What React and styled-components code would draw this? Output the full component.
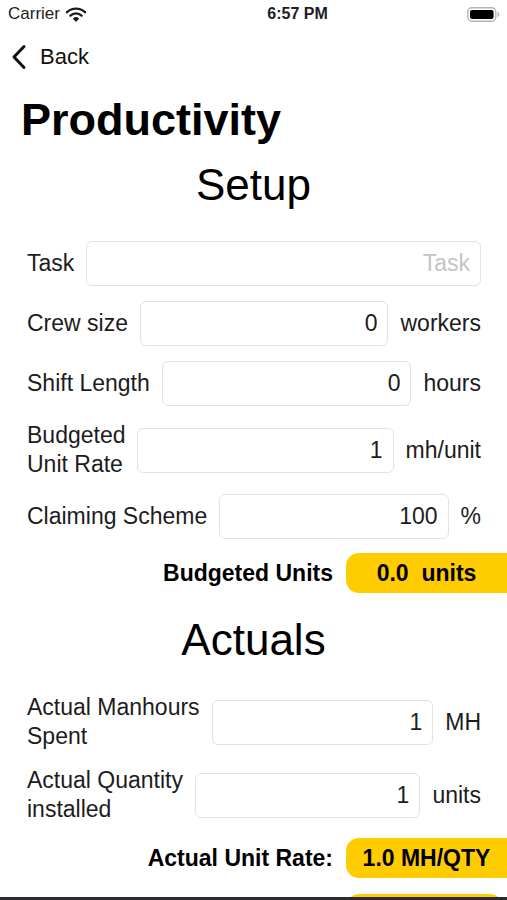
import React from "react";
import styled, { createGlobalStyle } from "styled-components";

const GlobalStyle = createGlobalStyle`
  html, body {
    margin: 0;
    padding: 0;
    background: #ffffff;
  }
  body {
    font-family: "Liberation Sans", Arial, sans-serif;
    color: #000;
  }
`;

const setupRows = [
  { label: "Task", placeholder: "Task", value: "", unit: null },
  { label: "Crew size", value: "0", unit: "workers" },
  { label: "Shift Length", value: "0", unit: "hours" },
  { label: ["Budgeted", "Unit Rate"], value: "1", unit: "mh/unit" },
  { label: "Claiming Scheme", value: "100", unit: "%" },
];

const actualRows = [
  { label: ["Actual Manhours", "Spent"], value: "1", unit: "MH" },
  { label: ["Actual Quantity", "installed"], value: "1", unit: "units" },
];

const WifiIcon = () => (
  <svg width="20" height="15" viewBox="0 0 20 15">
    <path d="M1 5.2 A13 13 0 0 1 19 5.2" stroke="#1c1c1e" strokeWidth="2.4" fill="none" strokeLinecap="round" />
    <path d="M4.4 8.6 A8.2 8.2 0 0 1 15.6 8.6" stroke="#1c1c1e" strokeWidth="2.4" fill="none" strokeLinecap="round" />
    <path d="M7.6 11.7 A3.6 3.6 0 0 1 12.4 11.7 L10 14.2 Z" fill="#1c1c1e" stroke="#1c1c1e" strokeWidth="1.2" strokeLinejoin="round" />
  </svg>
);

const BatteryIcon = () => (
  <svg width="33" height="15" viewBox="0 0 33 15">
    <rect x="0.8" y="0.8" width="28" height="13.4" rx="4" fill="none" stroke="#b4b4b6" strokeWidth="1.4" />
    <rect x="3" y="3" width="23.6" height="9" rx="2" fill="#000" />
    <path d="M30.6 5 Q32.4 5.3 32.4 7.5 Q32.4 9.7 30.6 10 Z" fill="#b4b4b6" />
  </svg>
);

const ChevronLeft = () => (
  <svg width="16" height="26" viewBox="0 0 16 26">
    <path d="M13 2.5 L3 13 L13 23.5" stroke="#111" strokeWidth="3" fill="none" strokeLinecap="round" strokeLinejoin="round" />
  </svg>
);

const FieldRow = ({ row }) => (
  <Row>
    <Label>
      {Array.isArray(row.label)
        ? row.label.map((l) => <span key={l}>{l}</span>)
        : row.label}
    </Label>
    <Field
      type="text"
      placeholder={row.placeholder}
      defaultValue={row.value}
    />
    {row.unit && <Unit>{row.unit}</Unit>}
  </Row>
);

const App = () => {
  return (
    <Page>
      <GlobalStyle />
      <StatusBar>
        <Carrier>
          Carrier <WifiIcon />
        </Carrier>
        <Time>6:57 PM</Time>
        <BatteryIcon />
      </StatusBar>
      <NavBar>
        <BackButton>
          <ChevronLeft />
          Back
        </BackButton>
      </NavBar>
      <Content>
        <Title>Productivity</Title>
        <SectionTitle>Setup</SectionTitle>
        <Form $top={30}>
          {setupRows.map((row, i) => (
            <FieldRow key={i} row={row} />
          ))}
          <ResultRow>
            <ResultLabel>Budgeted Units</ResultLabel>
            <Badge>0.0&nbsp; units</Badge>
          </ResultRow>
        </Form>
        <SectionTitle $top={21}>Actuals</SectionTitle>
        <Form $top={27}>
          {actualRows.map((row, i) => (
            <FieldRow key={i} row={row} />
          ))}
          <ResultRow>
            <ResultLabel>Actual Unit Rate:</ResultLabel>
            <Badge>1.0 MH/QTY</Badge>
          </ResultRow>
          {/* next result badge, only its top edge is on screen */}
          <ResultRow $gap={16}>
            <Badge $inset={4} />
          </ResultRow>
        </Form>
      </Content>
      <BottomEdge />
    </Page>
  );
};

export default App;

// Styled Components
const Page = styled.div`
  height: 900px;
  display: flex;
  flex-direction: column;
  overflow: hidden;
  background: #fff;
`;

const StatusBar = styled.div`
  height: 28px;
  flex-shrink: 0;
  display: flex;
  align-items: center;
  justify-content: space-between;
  padding: 0 7px 0 8px;
`;

const Carrier = styled.div`
  display: flex;
  align-items: center;
  gap: 6px;
  width: 120px;
  font-size: 17px;
  color: #1c1c1e;
`;

const Time = styled.div`
  font-size: 16px;
  font-weight: 700;
  color: #1c1c1e;
`;

const NavBar = styled.div`
  height: 58px;
  flex-shrink: 0;
  display: flex;
  align-items: center;
  padding-left: 11px;
`;

const BackButton = styled.div`
  display: flex;
  align-items: center;
  gap: 13px;
  font-size: 22px;
  color: #111;
`;

const Content = styled.div`
  flex: 1;
  overflow: hidden;
  display: flex;
  flex-direction: column;
`;

const Title = styled.h1`
  margin: 7px 0 0;
  padding-left: 21px;
  font-size: 45px;
  line-height: 54px;
  font-weight: 700;
  color: #000;
`;

const SectionTitle = styled.h2`
  margin: ${(p) => p.$top ?? 12}px 0 0;
  text-align: center;
  font-size: 44px;
  line-height: 52px;
  font-weight: 400;
  color: #000;
`;

const Form = styled.div`
  margin-top: ${(p) => p.$top}px;
  display: flex;
  flex-direction: column;
  gap: 15px;
`;

const Row = styled.div`
  display: flex;
  align-items: center;
  gap: 12px;
  padding: 0 26px 0 27px;
`;

const Label = styled.div`
  display: flex;
  flex-direction: column;
  font-size: 23px;
  line-height: 29px;
  color: #1c1c1e;
  white-space: nowrap;
`;

const Field = styled.input`
  flex: 1;
  min-width: 0;
  height: 45px;
  box-sizing: border-box;
  border: 1px solid #e2e2e4;
  border-radius: 6px;
  padding: 0 10px;
  text-align: right;
  font-family: "Liberation Sans", Arial, sans-serif;
  font-size: 23px;
  color: #1c1c1e;
  background: #fff;
  outline: none;

  &::placeholder {
    color: #c4c4c7;
  }
`;

const Unit = styled.div`
  font-size: 23px;
  color: #1c1c1e;
  white-space: nowrap;
`;

const ResultRow = styled.div`
  display: flex;
  align-items: center;
  justify-content: flex-end;
  gap: 13px;
  margin-top: ${(p) => (p.$gap ? p.$gap - 15 : -1)}px;
`;

const ResultLabel = styled.div`
  font-size: 23px;
  font-weight: 700;
  color: #000;
`;

const Badge = styled.div`
  width: ${(p) => 161 - (p.$inset || 0)}px;
  height: 40px;
  margin-right: ${(p) => p.$inset || 0}px;
  display: flex;
  align-items: center;
  justify-content: center;
  background: #ffcc00;
  border-radius: ${(p) => (p.$inset ? "13px" : "13px 0 0 13px")};
  font-size: 23px;
  font-weight: 700;
  color: #000;
  white-space: nowrap;
`;

const BottomEdge = styled.div`
  height: 3px;
  flex-shrink: 0;
  background: #2c2c2e;
`;
